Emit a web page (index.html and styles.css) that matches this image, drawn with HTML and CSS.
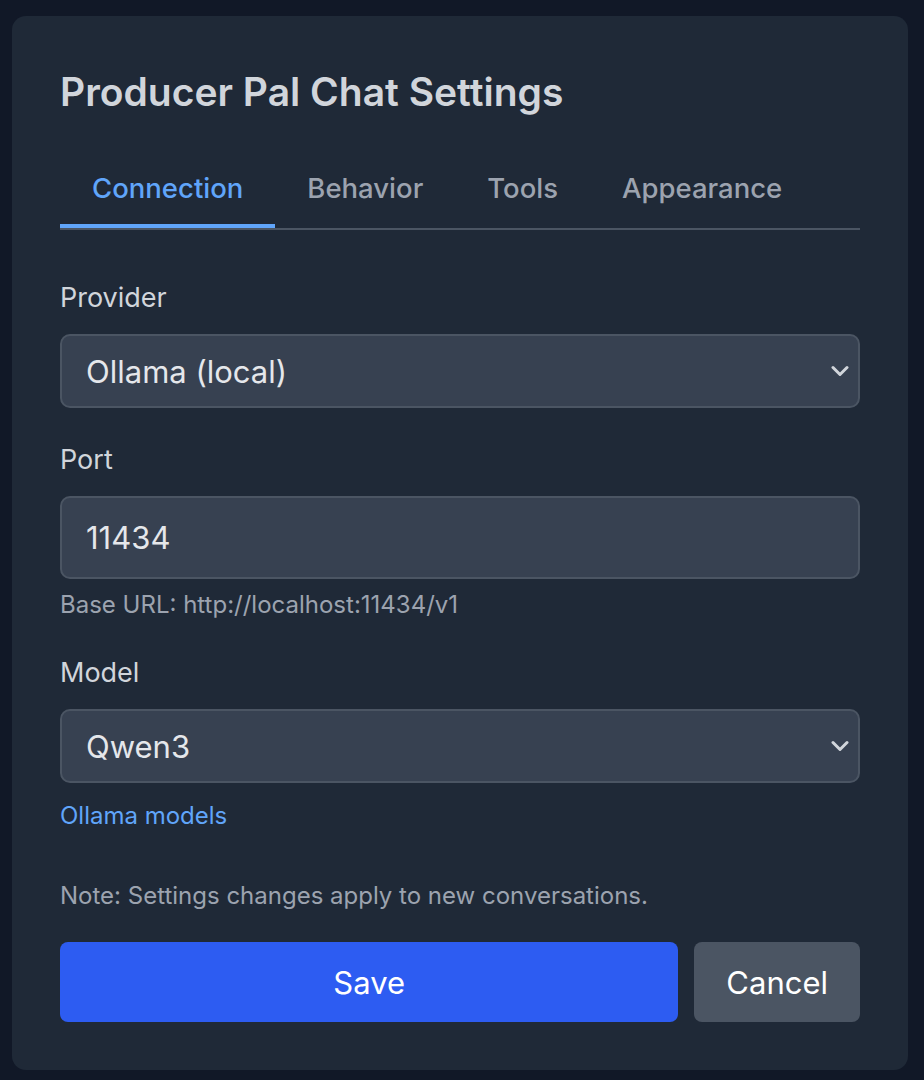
FILE: index.html
```html
<!DOCTYPE html>
<html lang="en">
<head>
<meta charset="utf-8">
<title>Producer Pal Chat Settings</title>
<link rel="stylesheet" href="styles.css">
</head>
<body>
<div class="card">
  <h1 class="title">Producer Pal Chat Settings</h1>
  <nav class="tabs">
    <button class="tab active">Connection</button>
    <button class="tab">Behavior</button>
    <button class="tab">Tools</button>
    <button class="tab">Appearance</button>
  </nav>
  <div class="panel">
    <div class="field">
      <label class="label">Provider</label>
      <div class="select-wrap">
        <select class="control select"><option>Ollama (local)</option></select>
        <svg class="chevron" width="18" height="12" viewBox="0 0 18 12"><path d="M2 2.5 L9 9.5 L16 2.5" fill="none" stroke="#d1d5db" stroke-width="3" stroke-linecap="round" stroke-linejoin="round"/></svg>
      </div>
    </div>
    <div class="field">
      <label class="label">Port</label>
      <input class="control input" type="text" value="11434">
      <p class="help">Base URL: http://localhost:11434/v1</p>
    </div>
    <div class="field">
      <label class="label">Model</label>
      <div class="select-wrap">
        <select class="control select"><option>Qwen3</option></select>
        <svg class="chevron" width="18" height="12" viewBox="0 0 18 12"><path d="M2 2.5 L9 9.5 L16 2.5" fill="none" stroke="#d1d5db" stroke-width="3" stroke-linecap="round" stroke-linejoin="round"/></svg>
      </div>
      <a class="link" href="#">Ollama models</a>
    </div>
    <p class="note">Note: Settings changes apply to new conversations.</p>
    <div class="actions">
      <button class="btn btn-primary">Save</button>
      <button class="btn btn-secondary">Cancel</button>
    </div>
  </div>
</div>
</body>
</html>
```

FILE: styles.css
```css
* { box-sizing: border-box; }
html, body { margin: 0; }
body {
  background: #111827;
  font-family: Inter, "Noto Sans", sans-serif;
  padding: 16px 12px;
  min-height: 1080px;
}
.card {
  width: 896px;
  background: #1f2937;
  border-radius: 14px;
  padding: 48px;
}
.title {
  margin: 0 0 32px;
  font-size: 39px;
  line-height: 56px;
  font-weight: 600;
  color: #d1d5db;
}
.tabs {
  display: flex;
  border-bottom: 2px solid #4b5563;
}
.tab {
  background: none;
  border: none;
  border-bottom: 4px solid transparent;
  padding: 16px 32px;
  font-family: inherit;
  font-size: 27.5px;
  line-height: 40px;
  font-weight: 500;
  color: #9ca3af;
  cursor: pointer;
}
.tab.active {
  color: #60a5fa;
  border-bottom-color: #60a5fa;
}
.panel { padding-top: 48px; }
.field { margin-bottom: 32px; }
.label {
  display: block;
  font-size: 27px;
  line-height: 40px;
  color: #d1d5db;
  margin-bottom: 16px;
}
.select-wrap { position: relative; }
.control {
  display: block;
  width: 100%;
  background: #374151;
  border: 2px solid #4b5563;
  border-radius: 10px;
  color: #e5e7eb;
  font-family: inherit;
  font-size: 31px;
  padding: 0 24px;
  outline: none;
}
.select {
  height: 74px;
  appearance: none;
  -webkit-appearance: none;
}
.input { height: 83px; }
.chevron {
  position: absolute;
  right: 11px;
  top: 31px;
}
.help {
  margin: 10px 0 0;
  font-size: 24px;
  line-height: 32px;
  color: #9ca3af;
}
.link {
  display: block;
  margin-top: 17px;
  font-size: 24px;
  line-height: 32px;
  color: #60a5fa;
  text-decoration: none;
}
.field:nth-child(3) { margin-bottom: 48px; }
.note {
  margin: 0 0 30px;
  font-size: 24px;
  line-height: 32px;
  color: #9ca3af;
}
.actions {
  display: flex;
  gap: 16px;
}
.btn {
  border: none;
  border-radius: 8px;
  height: 80px;
  font-family: inherit;
  font-size: 31px;
  color: #ffffff;
  padding: 0 32px;
  cursor: pointer;
}
.btn-primary { flex: 1; background: #2d5cf2; }
.btn-secondary { background: #4b5563; }
```
